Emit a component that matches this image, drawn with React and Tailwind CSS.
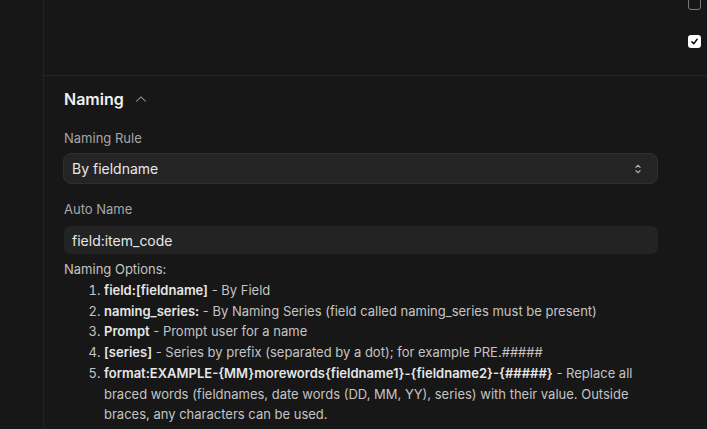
import React from "react";

function ChevronUp({ className }) {
  return (
    <svg className={className} viewBox="0 0 16 16" fill="none" stroke="currentColor" strokeWidth="1.2" strokeLinecap="round" strokeLinejoin="round">
      <path d="M3 10.5 L8 5.5 L13 10.5" />
    </svg>
  );
}

function UpDown({ className }) {
  return (
    <svg className={className} viewBox="0 0 12 16" fill="none" stroke="currentColor" strokeWidth="1.4" strokeLinecap="round" strokeLinejoin="round">
      <path d="M3.5 6 L6 3.5 L8.5 6" />
      <path d="M3.5 10 L6 12.5 L8.5 10" />
    </svg>
  );
}

export default function App() {
  return (
    <div
      className="w-full h-[429px] overflow-hidden flex bg-[#171717] text-[#d4d4d4]"
      style={{ fontFamily: "Inter, 'Noto Sans', sans-serif" }}
    >
      <div className="w-[44px] shrink-0 border-r border-[#232323]" />
      <div className="flex-1 min-w-0 flex flex-col">
        <div className="h-[76px] shrink-0 border-b border-[#262626] relative">
          <div className="absolute right-[6px] top-[-4px] w-[13px] h-[14px] rounded-[3px] border border-[#7a7a7a]" />
          <div className="absolute right-[6px] top-[35px] w-[13px] h-[13px] rounded-[3px] bg-white flex items-center justify-center">
            <svg viewBox="0 0 12 12" className="w-[9px] h-[9px]" fill="none" stroke="#111" strokeWidth="2" strokeLinecap="round" strokeLinejoin="round">
              <path d="M2.5 6.5 L5 9 L9.5 3" />
            </svg>
          </div>
        </div>
        <div className="pl-[20px] pr-[49px] pt-[11px]">
          <div className="flex items-center h-[24px]">
            <span className="text-[16px] font-semibold text-[#f0f0f0]">Naming</span>
            <ChevronUp className="w-[14px] h-[14px] ml-[10px] text-[#8a8a8a]" />
          </div>
          <div className="mt-[17px] text-[13px] leading-[20px] text-[#a8a8a8]">Naming Rule</div>
          <div className="mt-[5px] h-[31px] rounded-[8px] border border-[#2f2f2f] bg-[#242424] flex items-center justify-between pl-[8px] pr-[14px] -ml-[1px]">
            <span className="text-[14px] text-[#e8e8e8]">By fieldname</span>
            <UpDown className="w-[10px] h-[14px] text-[#b0b0b0]" />
          </div>
          <div className="mt-[15px] text-[13px] leading-[20px] text-[#a8a8a8]">Auto Name</div>
          <div className="mt-[7px] h-[28px] rounded-[7px] bg-[#232323] flex items-center px-[8px]">
            <span className="text-[14px] text-[#e8e8e8]">field:item_code</span>
          </div>
          <div className="mt-[5px] text-[13px] leading-[20.75px] text-[#c4c4c4]">
            <div>Naming Options:</div>
            <ol className="list-decimal pl-[40px]">
              <li>
                <b className="font-semibold text-[#e6e6e6]">field:[fieldname]</b> - By Field
              </li>
              <li>
                <b className="font-semibold text-[#e6e6e6]">naming_series:</b> - By Naming Series (field called naming_series must be present)
              </li>
              <li>
                <b className="font-semibold text-[#e6e6e6]">Prompt</b> - Prompt user for a name
              </li>
              <li>
                <b className="font-semibold text-[#e6e6e6]">[series]</b> - Series by prefix (separated by a dot); for example PRE.#####
              </li>
              <li>
                <b className="font-semibold text-[#e6e6e6]">format:EXAMPLE-{"{MM}"}morewords{"{fieldname1}"}-{"{fieldname2}"}-{"{#####}"}</b> - Replace all braced words (fieldnames, date words (DD, MM, YY), series) with their value. Outside braces, any characters can be used.
              </li>
            </ol>
          </div>
        </div>
      </div>
    </div>
  );
}
